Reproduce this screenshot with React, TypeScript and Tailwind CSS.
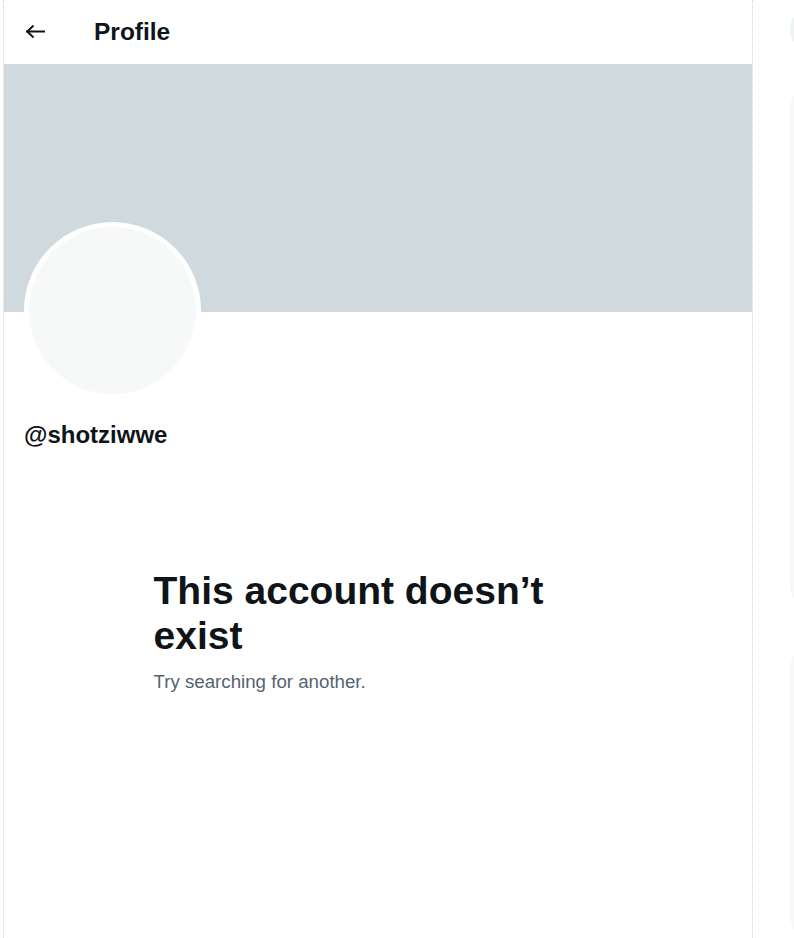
import React from "react";

export default function App() {
  return (
    <div
      className="w-[794px] h-[938px] overflow-hidden bg-white flex pl-[3px] gap-[37px]"
      style={{ fontFamily: '"Liberation Sans", Arial, sans-serif' }}
    >
      <main className="w-[750px] shrink-0 h-[938px] border-x border-dotted border-[#cfd5d9] flex flex-col">
        <header className="h-[64px] flex items-center">
          <button className="ml-[15px] w-[32px] h-[32px] flex items-center justify-center">
            <svg width="22" height="16" viewBox="0 0 22 16" fill="none" stroke="#0f1419" strokeWidth="2" strokeLinecap="square">
              <path d="M3 7.5H20" />
              <path d="M9.5 1.5L3.3 7.5L9.5 13.5" strokeLinecap="butt" />
            </svg>
          </button>
          <h1 className="ml-[43px] text-[24.5px] font-bold text-[#0f1419] leading-none">Profile</h1>
        </header>
        <div className="h-[248px] bg-[#cfd9de]" />
        <div className="px-[20px]">
          <div className="-mt-[90px] w-[177px] h-[177px] rounded-full bg-white p-[5px]">
            <div className="w-full h-full rounded-full bg-[#f7f9f9]" />
          </div>
          <div className="mt-[21px] text-[24px] leading-[30px] font-bold text-[#0f1419]">@shotziwwe</div>
        </div>
        <div className="mt-[118px] w-[449px] mx-auto">
          <h2 className="text-[39px] leading-[45px] font-bold text-[#0f1419]">This account doesn’t exist</h2>
          <p className="mt-[12px] text-[18.7px] leading-[24px] text-[#536471]">Try searching for another.</p>
        </div>
      </main>
      <aside className="w-[440px] shrink-0 flex flex-col">
        <div className="mt-[7px] h-[46px] rounded-full bg-[#eff3f4]" />
        <div className="mt-[35px] h-[537px] rounded-[20px] bg-[#f7f9f9]" />
        <div className="mt-[40px] h-[300px] rounded-[20px] bg-[#f7f9f9]" />
      </aside>
    </div>
  );
}
